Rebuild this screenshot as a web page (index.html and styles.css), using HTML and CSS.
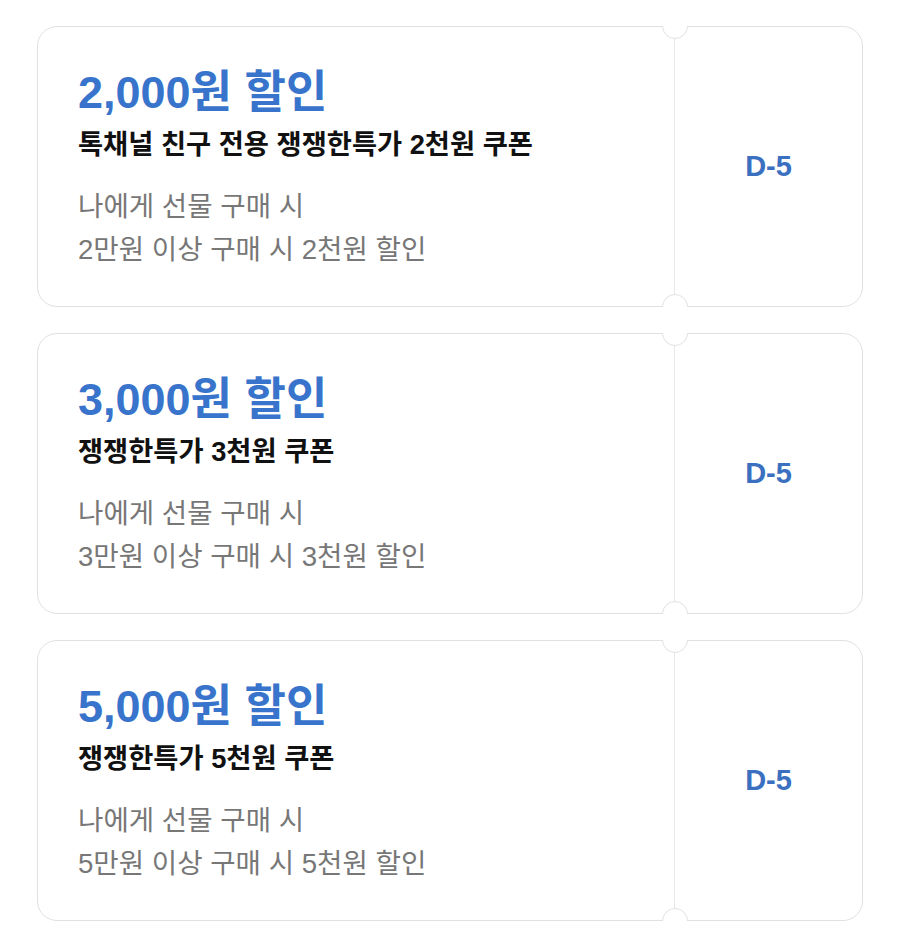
FILE: index.html
```html
<!DOCTYPE html>
<html lang="ko">
<head>
    <meta charset="UTF-8">
    <meta name="viewport" content="width=device-width, initial-scale=1.0">
    <title>쿠폰</title>
    <link rel="stylesheet" href="styles.css">
</head>
<body>
    <div class="coupon-list">
        <!-- coupon 1 -->
        <div class="coupon">
            <div class="coupon-info">
                <div class="amount">2,000원 할인</div>
                <div class="name">톡채널 친구 전용 쟁쟁한특가 2천원 쿠폰</div>
                <div class="desc">
                    <p>나에게 선물 구매 시</p>
                    <p>2만원 이상 구매 시 2천원 할인</p>
                </div>
            </div>
            <div class="coupon-side">D-5</div>
            <span class="notch notch-top"></span>
            <span class="notch notch-bottom"></span>
        </div>

        <!-- coupon 2 -->
        <div class="coupon">
            <div class="coupon-info">
                <div class="amount">3,000원 할인</div>
                <div class="name">쟁쟁한특가 3천원 쿠폰</div>
                <div class="desc">
                    <p>나에게 선물 구매 시</p>
                    <p>3만원 이상 구매 시 3천원 할인</p>
                </div>
            </div>
            <div class="coupon-side">D-5</div>
            <span class="notch notch-top"></span>
            <span class="notch notch-bottom"></span>
        </div>

        <!-- coupon 3 -->
        <div class="coupon">
            <div class="coupon-info">
                <div class="amount">5,000원 할인</div>
                <div class="name">쟁쟁한특가 5천원 쿠폰</div>
                <div class="desc">
                    <p>나에게 선물 구매 시</p>
                    <p>5만원 이상 구매 시 5천원 할인</p>
                </div>
            </div>
            <div class="coupon-side">D-5</div>
            <span class="notch notch-top"></span>
            <span class="notch notch-bottom"></span>
        </div>
    </div>
</body>
</html>
```

FILE: styles.css
```css
body {
    font-family: "Liberation Sans", "Noto Sans CJK KR", sans-serif;
    margin: 0;
    background-color: #fff;
}

.coupon-list {
    display: flex;
    flex-direction: column;
    gap: 26px;
    padding: 26px 37px 0 37px;
}

.coupon {
    position: relative;
    display: flex;
    height: 281px;
    box-sizing: border-box;
    border: 1px solid #e1e1e1;
    border-radius: 20px;
    background-color: #fff;
}

.coupon-info {
    width: 637px;
    box-sizing: border-box;
    padding: 40px 0 0 40px;
    border-right: 1px solid #e8e8e8;
}

.amount {
    font-size: 45px;
    font-weight: bold;
    color: #3874cb;
    line-height: 52px;
}

.name {
    margin-top: 10px;
    font-size: 27.3px;
    font-weight: bold;
    color: #111;
    line-height: 32px;
}

.desc {
    margin-top: 24px;
    font-size: 27.6px;
    color: #777;
}

.desc p {
    margin: 0;
    line-height: 43px;
}

.coupon-side {
    flex: 1;
    display: flex;
    align-items: center;
    justify-content: center;
    font-size: 29px;
    font-weight: bold;
    color: #3a70bf;
}

.notch {
    position: absolute;
    left: 624px;
    width: 26px;
    height: 26px;
    box-sizing: border-box;
    border: 1px solid #e1e1e1;
    border-radius: 50%;
    background-color: #fff;
}

.notch-top {
    top: -14px;
    clip-path: inset(13px 0 0 0);
}

.notch-bottom {
    bottom: -14px;
    clip-path: inset(0 0 13px 0);
}
```
